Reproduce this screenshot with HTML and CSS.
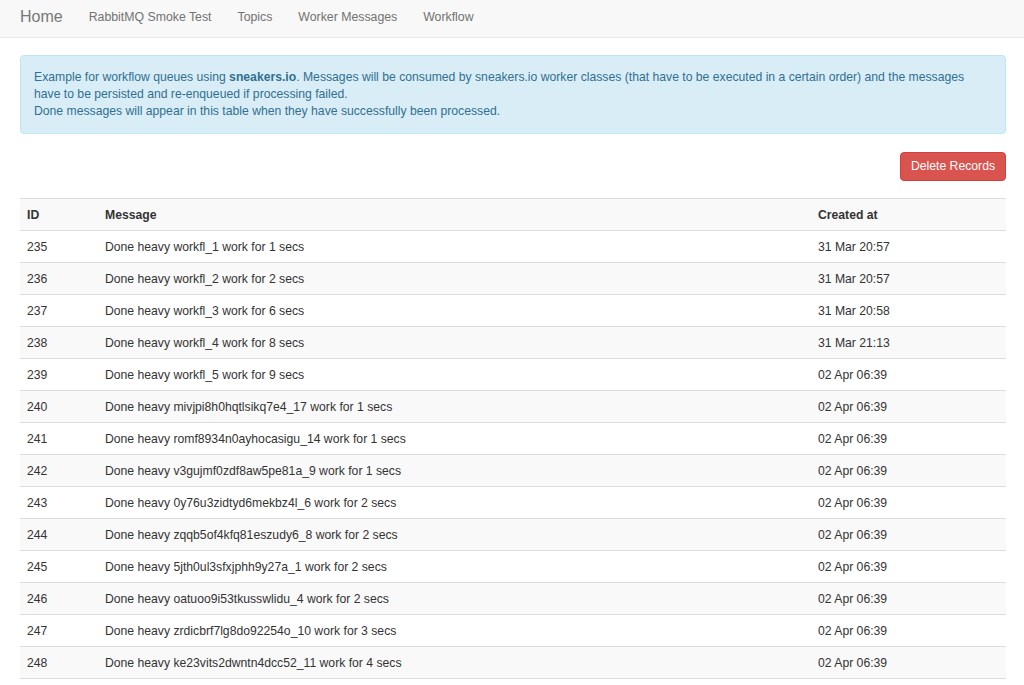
FILE: index.html
```html
<!DOCTYPE html>
<html lang="en">
<head>
<meta charset="utf-8">
<title>Workflow</title>
<link rel="stylesheet" href="styles.css">
</head>
<body>
<nav class="navbar">
  <a class="brand" href="#">Home</a>
  <ul class="nav">
    <li><a href="#">RabbitMQ Smoke Test</a></li>
    <li><a href="#">Topics</a></li>
    <li><a href="#">Worker Messages</a></li>
    <li><a href="#">Workflow</a></li>
  </ul>
</nav>
<main class="container">
  <div class="alert">
    <p class="alert-line">Example for workflow queues using <b>sneakers.io</b>. Messages will be consumed by sneakers.io worker classes (that have to be executed in a certain order) and the messages have to be persisted and re-enqueued if processing failed.</p>
    <p class="alert-line">Done messages will appear in this table when they have successfully been processed.</p>
  </div>
  <div class="actions">
    <button class="btn-danger" type="button">Delete Records</button>
  </div>
  <table class="table">
    <colgroup><col class="c-id"><col class="c-msg"><col class="c-date"></colgroup>
    <tbody>
      <tr class="head"><th>ID</th><th>Message</th><th>Created at</th></tr>
      <tr><td>235</td><td>Done heavy workfl_1 work for 1 secs</td><td>31 Mar 20:57</td></tr>
      <tr><td>236</td><td>Done heavy workfl_2 work for 2 secs</td><td>31 Mar 20:57</td></tr>
      <tr><td>237</td><td>Done heavy workfl_3 work for 6 secs</td><td>31 Mar 20:58</td></tr>
      <tr><td>238</td><td>Done heavy workfl_4 work for 8 secs</td><td>31 Mar 21:13</td></tr>
      <tr><td>239</td><td>Done heavy workfl_5 work for 9 secs</td><td>02 Apr 06:39</td></tr>
      <tr><td>240</td><td>Done heavy mivjpi8h0hqtlsikq7e4_17 work for 1 secs</td><td>02 Apr 06:39</td></tr>
      <tr><td>241</td><td>Done heavy romf8934n0ayhocasigu_14 work for 1 secs</td><td>02 Apr 06:39</td></tr>
      <tr><td>242</td><td>Done heavy v3gujmf0zdf8aw5pe81a_9 work for 1 secs</td><td>02 Apr 06:39</td></tr>
      <tr><td>243</td><td>Done heavy 0y76u3zidtyd6mekbz4l_6 work for 2 secs</td><td>02 Apr 06:39</td></tr>
      <tr><td>244</td><td>Done heavy zqqb5of4kfq81eszudy6_8 work for 2 secs</td><td>02 Apr 06:39</td></tr>
      <tr><td>245</td><td>Done heavy 5jth0ul3sfxjphh9y27a_1 work for 2 secs</td><td>02 Apr 06:39</td></tr>
      <tr><td>246</td><td>Done heavy oatuoo9i53tkusswlidu_4 work for 2 secs</td><td>02 Apr 06:39</td></tr>
      <tr><td>247</td><td>Done heavy zrdicbrf7lg8do92254o_10 work for 3 secs</td><td>02 Apr 06:39</td></tr>
      <tr><td>248</td><td>Done heavy ke23vits2dwntn4dcc52_11 work for 4 secs</td><td>02 Apr 06:39</td></tr>
    </tbody>
  </table>
</main>
</body>
</html>
```

FILE: styles.css
```css
* { box-sizing: border-box; }
html, body { margin: 0; padding: 0; }
body {
  font-family: "Liberation Sans", Arial, sans-serif;
  font-size: 12.2px;
  line-height: 18px;
  color: #333;
  background: #fff;
}
a { text-decoration: none; }

.navbar {
  display: flex;
  align-items: center;
  height: 38px;
  background: #f8f8f8;
  border-bottom: 1px solid #e7e7e7;
  padding: 0 0 4px 20px;
}
.brand {
  font-size: 16px;
  color: #777;
  margin-right: 13px;
}
.nav {
  display: flex;
  list-style: none;
  margin: 0;
  padding: 0;
}
.nav a {
  display: block;
  padding: 0 13px;
  color: #727272;
  font-size: 12.3px;
}

.container {
  padding: 17px 18px 0 20px;
}

.alert {
  background: #d9edf7;
  border: 1px solid #bce8f1;
  color: #31708f;
  border-radius: 4px;
  padding: 13px 14px 13px 13px;
  font-size: 12.2px;
  line-height: 17px;
}
.alert-line { margin: 0; }
.alert b { font-weight: bold; }

.actions {
  display: flex;
  justify-content: flex-end;
  margin-top: 18px;
  margin-bottom: 17px;
}
.btn-danger {
  font-family: inherit;
  font-size: 12.2px;
  line-height: 17px;
  height: 29px;
  padding: 5px 10px;
  color: #fff;
  background: #d9534f;
  border: 1px solid #d43f3a;
  border-radius: 4px;
}

.table {
  width: 986px;
  border-collapse: collapse;
  table-layout: fixed;
}
.c-id { width: 78px; }
.c-msg { width: 713px; }
.c-date { width: 195px; }
.table th, .table td {
  text-align: left;
  padding: 7px 7px 6px;
  height: 32px;
  line-height: 18px;
  border-top: 1px solid #ddd;
  vertical-align: top;
}
.table th { font-weight: bold; }
.table tr:nth-child(odd) { background: #f9f9f9; }
.table tr:last-child td { border-bottom: 1px solid #ddd; }
```
